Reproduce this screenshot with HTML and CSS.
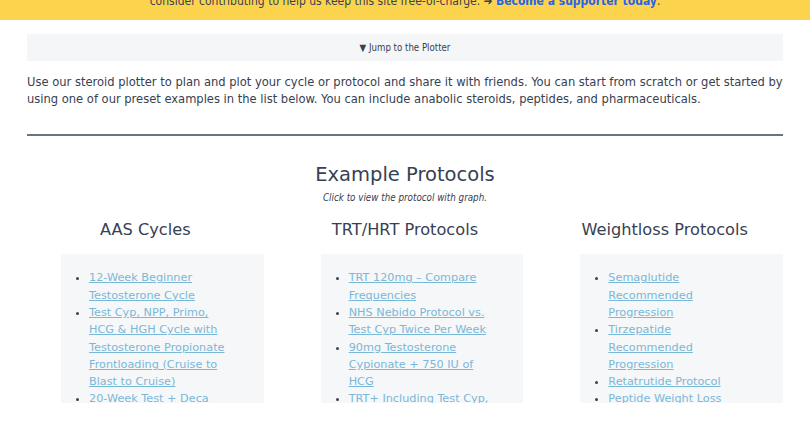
FILE: index.html
```html
<!DOCTYPE html>
<html lang="en">
<head>
    <meta charset="UTF-8">
    <meta name="viewport" content="width=device-width, initial-scale=1.0">
    <title>Steroid Plotter</title>
    <link rel="stylesheet" href="styles.css">
</head>
<body>
<div class="page">

    <div class="support-banner">
        <p>consider contributing to help us keep this site free-of-charge. &#10140; <a href="#">Become a supporter today</a>.</p>
    </div>

    <div class="content-container">
        <a class="jump-bar" href="#plotter">&#9660; Jump to the Plotter</a>

        <p class="intro">Use our steroid plotter to plan and plot your cycle or protocol and share it with friends. You can start from scratch or get started by using one of our preset examples in the list below. You can include anabolic steroids, peptides, and pharmaceuticals.</p>

        <hr class="divider">

        <h1>Example Protocols</h1>
        <p class="hint">Click to view the protocol with graph.</p>

        <div class="protocol-grid">
            <div class="protocol-col">
                <h2>AAS Cycles</h2>
                <div class="protocol-card">
                    <ul>
                        <li><a href="#">12-Week Beginner Testosterone Cycle</a></li>
                        <li><a href="#">Test Cyp, NPP, Primo, HCG &amp; HGH Cycle with Testosterone Propionate Frontloading (Cruise to Blast to Cruise)</a></li>
                        <li><a href="#">20-Week Test + Deca Cycle</a></li>
                        <li><a href="#">Test, Tren &amp; Masteron Cycle</a></li>
                    </ul>
                </div>
            </div>

            <div class="protocol-col">
                <h2>TRT/HRT Protocols</h2>
                <div class="protocol-card">
                    <ul>
                        <li><a href="#">TRT 120mg &ndash; Compare Frequencies</a></li>
                        <li><a href="#">NHS Nebido Protocol vs. Test Cyp Twice Per Week</a></li>
                        <li><a href="#">90mg Testosterone Cypionate + 750 IU of HCG</a></li>
                        <li><a href="#">TRT+ Including Test Cyp, HCG &amp; Anastrozole</a></li>
                    </ul>
                </div>
            </div>

            <div class="protocol-col">
                <h2>Weightloss Protocols</h2>
                <div class="protocol-card">
                    <ul>
                        <li><a href="#">Semaglutide Recommended Progression</a></li>
                        <li><a href="#">Tirzepatide Recommended Progression</a></li>
                        <li><a href="#">Retatrutide Protocol</a></li>
                        <li><a href="#">Peptide Weight Loss Stack</a></li>
                    </ul>
                </div>
            </div>
        </div>
    </div>

</div>
</body>
</html>
```

FILE: styles.css
```css
* {
    margin: 0;
    padding: 0;
    box-sizing: border-box;
}

body {
    font-family: 'DejaVu Sans', sans-serif;
    background-color: #fff;
    color: #374151;
}

/* the screenshot stops before the cards do */
.page {
    height: 403px;
    overflow: hidden;
}

.support-banner {
    background-color: #fcd34d;
    margin-top: -8px;
    padding-bottom: 10px;
    text-align: center;
}

.support-banner p {
    font-family: 'DejaVu Sans Condensed', 'DejaVu Sans', sans-serif;
    font-stretch: condensed;
    font-size: 12px;
    line-height: 18px;
    color: #374151;
}

.support-banner a {
    color: #2563eb;
    font-weight: bold;
    text-decoration: none;
}

.content-container {
    padding: 14px 27px 0;
}

.jump-bar {
    display: block;
    height: 27px;
    line-height: 27px;
    background-color: #f5f6f8;
    text-align: center;
    font-family: 'DejaVu Sans Condensed', 'DejaVu Sans', sans-serif;
    font-stretch: condensed;
    font-size: 9.6px;
    color: #374151;
    text-decoration: none;
}

.intro {
    margin-top: 12px;
    font-family: 'DejaVu Sans Condensed', 'DejaVu Sans', sans-serif;
    font-stretch: condensed;
    font-size: 12.8px;
    line-height: 17.2px;
}

.divider {
    border: none;
    height: 2px;
    background-color: #6b7280;
    margin-top: 27px;
}

h1 {
    margin-top: 26px;
    text-align: center;
    font-size: 19.5px;
    font-weight: normal;
    line-height: 26px;
}

.hint {
    margin-top: 3px;
    text-align: center;
    font-family: 'DejaVu Sans Condensed', 'DejaVu Sans', sans-serif;
    font-stretch: condensed;
    font-style: italic;
    font-size: 9.75px;
    line-height: 14px;
}

.protocol-grid {
    display: grid;
    grid-template-columns: repeat(3, 1fr);
    gap: 23px;
    margin-top: 14px;
}

h2 {
    text-align: center;
    font-size: 16.2px;
    font-weight: normal;
    line-height: 22px;
    margin-bottom: 13px;
}

.protocol-card {
    margin-left: 34px;
    background-color: #f5f7f9;
    padding: 15px 30px 14px 0;
}

.protocol-card ul {
    padding-left: 28px;
    font-size: 11.25px;
    line-height: 17.3px;
}

.protocol-card li::marker {
    color: #374151;
}

.protocol-card a {
    color: #7ab8d8;
}
```
